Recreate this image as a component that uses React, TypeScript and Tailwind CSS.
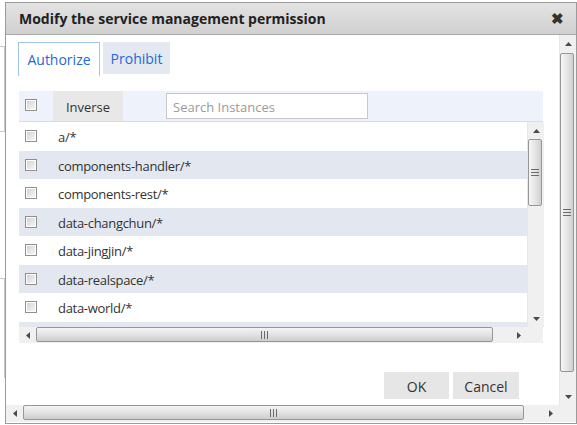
import React from 'react';

const font = { fontFamily: '"Open Sans", "Noto Sans", Arial, sans-serif' };

const items = [
  'a/*',
  'components-handler/*',
  'components-rest/*',
  'data-changchun/*',
  'data-jingjin/*',
  'data-realspace/*',
  'data-world/*',
  '',
];

function Checkbox() {
  return (
    <div className="w-[12px] h-[12px] border border-[#8e8f8f] bg-white p-[1px] shrink-0">
      <div className="w-full h-full bg-gradient-to-br from-[#d4d4d4] to-[#f6f6f6]" />
    </div>
  );
}

function Arrow({ dir }: { dir: 'up' | 'down' | 'left' | 'right' }) {
  const pts = {
    up: '0,4 7,4 3.5,0',
    down: '0,0 7,0 3.5,4',
    left: '4,0 4,7 0,3.5',
    right: '0,0 0,7 4,3.5',
  }[dir];
  const vertical = dir === 'up' || dir === 'down';
  return (
    <svg width={vertical ? 7 : 4} height={vertical ? 4 : 7} viewBox={vertical ? '0 0 7 4' : '0 0 4 7'}>
      <polygon points={pts} fill="#4a4a4a" />
    </svg>
  );
}

function Grip({ vertical }: { vertical?: boolean }) {
  return vertical ? (
    <svg width="8" height="7" viewBox="0 0 8 7">
      <rect x="0" y="0" width="8" height="1" fill="#6a6a6a" />
      <rect x="0" y="3" width="8" height="1" fill="#6a6a6a" />
      <rect x="0" y="6" width="8" height="1" fill="#6a6a6a" />
    </svg>
  ) : (
    <svg width="7" height="8" viewBox="0 0 7 8">
      <rect x="0" y="0" width="1" height="8" fill="#6a6a6a" />
      <rect x="3" y="0" width="1" height="8" fill="#6a6a6a" />
      <rect x="6" y="0" width="1" height="8" fill="#6a6a6a" />
    </svg>
  );
}

function VScroll({ thumbTop, thumbH }: { thumbTop: number; thumbH: number }) {
  return (
    <div className="w-[17px] h-full bg-[#f0f0f0] border-l border-[#e6e6e6] flex flex-col">
      <div className="h-[17px] flex items-center justify-center shrink-0">
        <Arrow dir="up" />
      </div>
      <div className="flex-1 relative">
        <div
          className="absolute left-[0px] w-[14px] rounded-[2px] border border-[#979797] bg-gradient-to-r from-[#f4f4f4] via-[#e6e6e6] to-[#cfcfcf] flex items-center justify-center"
          style={{ top: thumbTop, height: thumbH }}
        >
          <Grip vertical />
        </div>
      </div>
      <div className="h-[17px] flex items-center justify-center shrink-0">
        <Arrow dir="down" />
      </div>
    </div>
  );
}

function HScroll({ thumbW }: { thumbW: number }) {
  return (
    <div className="h-full flex-1 bg-[#f0f0f0] flex">
      <div className="w-[17px] flex items-center justify-center shrink-0">
        <Arrow dir="left" />
      </div>
      <div className="flex-1 relative">
        <div
          className="absolute top-[0px] h-[15px] left-0 rounded-[2px] border border-[#979797] bg-gradient-to-b from-[#f4f4f4] via-[#e3e3e3] to-[#cdcdcd] flex items-center justify-center"
          style={{ width: thumbW }}
        >
          <Grip />
        </div>
      </div>
      <div className="w-[17px] flex items-center justify-center shrink-0">
        <Arrow dir="right" />
      </div>
    </div>
  );
}

export default function App() {
  return (
    <div className="w-[577px] h-[425px] bg-white flex overflow-hidden" style={font}>
      {/* page behind the dialog */}
      <div className="w-[5px] h-full flex flex-col pt-[46px]">
        <div className="h-[86px] border-t border-b border-r border-[#c8c8c8]" />
        <div className="h-[146px]" />
        <div className="h-[100px] border-t border-r border-[#c8c8c8]" />
      </div>

      <div className="mt-[2px] w-[572px] h-[422px] border border-[#9b9b9b] flex flex-col bg-white">
        {/* title bar */}
        <div className="h-[32px] shrink-0 border-b border-[#a8a8a8] bg-gradient-to-b from-[#e3e3e3] to-[#d0d0d0] flex items-center justify-between pl-[13px] pr-[12px] pb-[1px]">
          <span className="text-[14px] font-bold text-[#222]">
            Modify the service management permission
          </span>
          <span className="text-[15px] font-bold text-[#333] leading-none">✖</span>
        </div>

        {/* body */}
        <div className="h-[370px] flex shrink-0">
          <div className="flex-1 flex flex-col pt-[7px] overflow-hidden">
            <div className="flex gap-[3px] pl-[12px] items-start">
              <div className="h-[34px] w-[82px] border border-b-0 border-[#9ec5ee] bg-white flex items-center justify-center pb-[1px] text-[14px] text-[#2368d6]">
                Authorize
              </div>
              <div className="h-[32px] w-[67px] bg-[#e4e9f1] flex items-center justify-center text-[14px] text-[#2368d6]">
                Prohibit
              </div>
            </div>

            <div className="ml-[13px] mt-[15px] w-[524px] flex flex-col">
              <div className="h-[31px] bg-[#eef3fb] border-b border-[#dcdcdc] flex items-start">
                <div className="pl-[6px] pt-[8px] w-[34px]">
                  <Checkbox />
                </div>
                <div className="h-[30px] w-[70px] bg-[#e8e8e8] flex items-center justify-center pt-[3px] text-[13px] text-[#333]">
                  Inverse
                </div>
                <div className="ml-[43px] mt-[2px] h-[26px] w-[202px] border border-[#c8c8c8] bg-white flex items-center pl-[6px] pt-[3px] text-[13px] text-[#9a9a9a]">
                  Search Instances
                </div>
              </div>

              <div className="flex h-[205px]">
                <div className="flex-1 overflow-hidden">
                  {items.map((name, i) => (
                    <div
                      key={i}
                      className={`h-[28.5px] flex items-center pl-[6px] gap-[21px] text-[13px] tracking-[-0.3px] text-[#333] ${
                        i % 2 === 1 ? 'bg-[#e3e8f0]' : 'bg-white'
                      }`}
                    >
                      <Checkbox />
                      <span className="pt-[3px]">{name}</span>
                    </div>
                  ))}
                </div>
                <div className="w-[16px] h-full">
                  <VScroll thumbTop={0} thumbH={67} />
                </div>
              </div>
              <div className="flex h-[16px]">
                <HScroll thumbW={457} />
                <div className="w-[16px] bg-[#f0f0f0]" />
              </div>
            </div>

            <div className="flex justify-end gap-[4px] pr-[40px] mt-[29px]">
              <div className="h-[27px] w-[65px] bg-[#e6e6e6] flex items-center justify-center pt-[1px] text-[14px] text-[#333]">
                OK
              </div>
              <div className="h-[27px] w-[66px] bg-[#e6e6e6] flex items-center justify-center pt-[1px] text-[14px] text-[#333]">
                Cancel
              </div>
            </div>
          </div>
          <VScroll thumbTop={1} thumbH={319} />
        </div>

        {/* bottom scrollbar */}
        <div className="h-[17px] flex shrink-0">
          <HScroll thumbW={501} />
          <div className="w-[17px] bg-[#f0f0f0]" />
        </div>
      </div>
    </div>
  );
}
